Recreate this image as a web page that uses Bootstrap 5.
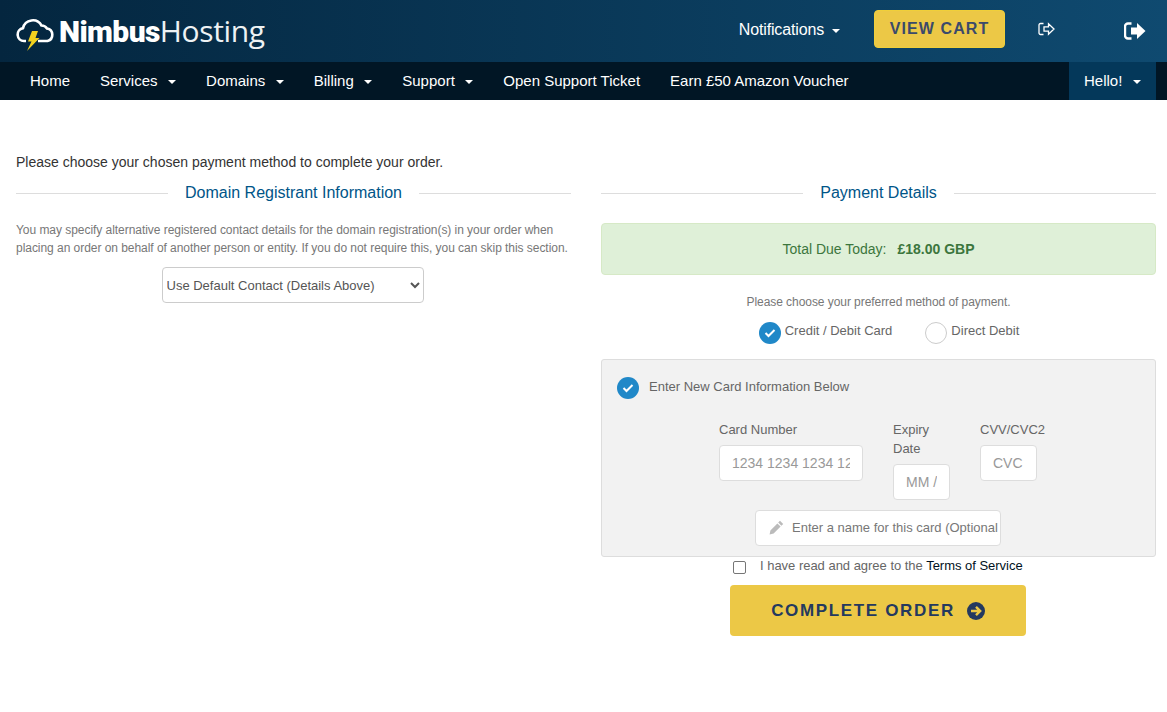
<!DOCTYPE html>
<html lang="en">
<head>
<meta charset="utf-8">
<title>Checkout</title>
<link href="https://cdn.jsdelivr.net/npm/bootstrap@5.3.0/dist/css/bootstrap.min.css" rel="stylesheet">
<style>
body{font-family:"Liberation Sans",Arial,sans-serif;font-size:14px;color:#333;background:#fff;}
.top-strip{height:62px;background:linear-gradient(90deg,#04263f 0%,#0f4a70 100%);padding:0 11px 0 16px;}
.brand-wrap{gap:3px;}
.brand-text{font-family:"Open Sans","Noto Sans",sans-serif;font-size:30px;color:#eef2f4;line-height:1;font-weight:400;letter-spacing:-.35px;}
.brand-text b{font-family:Roboto,"Open Sans",sans-serif;font-weight:900;color:#fff;letter-spacing:-.6px;}
.notif-link{color:#fff;font-size:16px;text-decoration:none;margin:0 34px 2px 0;letter-spacing:-.15px;}
.caret-mark{display:inline-block;width:0;height:0;border-left:4px solid transparent;border-right:4px solid transparent;border-top:4px solid currentColor;vertical-align:middle;margin-left:8px;}
.cart-btn{background:#ecc846;border:1px solid #f0cf3a;color:#3b4a6b;font-weight:700;font-size:16px;letter-spacing:1.1px;width:131px;height:38px;padding:0;border-radius:4px;line-height:1;margin-bottom:4px;}
.icon-gap-a{margin:0 0 4px 33px;}
.icon-gap-b{margin-left:69px;margin-right:10px;}
.nav-strip{height:38px;background:#011625;padding:0 11px 0 15px;}
.nav-entry{color:#fff;font-size:15px;text-decoration:none;padding:0 15px;line-height:38px;display:block;white-space:nowrap;}
.nav-entry .caret-mark{margin-left:10.5px;}
.hello-entry{background:#04385a;width:87px;}
.page-wrap{padding:52px 11px 0 16px;}
.lead-line{font-size:14px;line-height:20px;margin:0 0 11px;}
.cols{display:grid;grid-template-columns:555px 555px;column-gap:30px;}
.rule-head{display:flex;align-items:center;height:20px;color:#058;font-size:16px;line-height:20px;}
.rule-head::before,.rule-head::after{content:"";flex:1;border-top:1px solid #ddd;}
.rule-head span{padding:0 17px;}
.help-text{font-size:12px;line-height:18px;color:#777;margin:18px 0 10px;letter-spacing:-.045px;}
.contact-select{width:262px;height:36px;font-size:13px;color:#555;border:1px solid #ccc;border-radius:4px;padding:0;margin-right:2px;font-family:inherit;background-color:#fff;}
.due-box{height:52px;margin-top:20px;background:#dff0d8;border:1px solid #d6e9c6;border-radius:4px;color:#3c763d;font-size:14px;}
.due-box strong{margin-left:11px;}
.choose-line{font-size:12px;color:#777;text-align:center;margin:19px 0 0;line-height:17px;letter-spacing:-.06px;}
.pay-opts{gap:33px;margin-top:10px;height:24px;font-size:13px;color:#666;padding-left:21px;}
.pay-opt{gap:4px;line-height:17px;}
.pay-label{position:relative;top:-3px;}
.circle-on,.circle-off{width:22px;height:22px;border-radius:50%;flex:none;display:flex;align-items:center;justify-content:center;}
.circle-on{background:#2088c8;}
.circle-off{background:#fff;border:1px solid #ccc;}
.card-panel{margin-top:14px;height:198px;background:#f2f2f2;border:1px solid #ddd;border-radius:3px;padding:17px 15px 0;font-size:13px;color:#666;}
.panel-head{gap:10px;height:22px;line-height:20px;}
.panel-head .pay-label{top:-1px;}
.field-grid{display:flex;align-items:flex-start;justify-content:center;gap:30px;margin-top:21px;padding-left:7px;}
.field-grid label{display:block;line-height:19px;margin-bottom:6px;}
.cvc-col{width:65px;white-space:nowrap;}
.card-field{display:block;height:36px;background:#fff;border:1px solid #ddd;border-radius:4px;font-size:14px;padding:0 12px;outline:0;}
.card-field::placeholder{color:#999;opacity:1;}
.num-field{width:144px;}
.exp-field,.cvc-field{width:57px;}
.name-wrap{width:246px;margin:10px 0 0 138px;}
.name-field{width:100%;font-size:13px;padding:0 2px 2px 36px;}
.name-field::placeholder{color:#777;}
.pencil-mark{position:absolute;left:14px;top:10px;}
.terms-row{gap:14px;margin-top:1px;height:20px;font-size:13px;color:#666;padding-left:132px;line-height:17px;}
.terms-row .form-check-input{margin:3px 0 0;width:13px;height:13px;border-color:#767676;border-radius:2px;flex:none;}
.terms-text{letter-spacing:-.02px;position:relative;top:-1px;}
.terms-text a{color:#012;text-decoration:none;}
.finish-btn{display:flex;align-items:center;justify-content:center;gap:12px;width:296px;height:51px;margin:7px 0 0 129px;background:#ecc846;border:0;border-radius:4px;color:#24395f;font-size:17px;font-weight:700;letter-spacing:1.65px;padding:0;}
</style>
</head>
<body>
<header>
  <div class="top-strip d-flex align-items-center">
    <div class="brand-wrap d-flex align-items-center">
      <svg width="40" height="40" viewBox="0 0 40 40"><path d="M10 30H8A6.500 6.500 0 0 1 7 17.100 10 10 0 0 1 25.500 14.500 6.500 6.500 0 0 1 31 17.500 6.400 6.400 0 0 1 31.500 30H22" fill="none" stroke="#fff" stroke-width="2.600"/><path d="M16 20H22L19.500 27H23.500L11 40 15.500 30.500H12z" fill="#f2d21f"/></svg>
      <div class="brand-text"><b>Nimbus</b>Hosting</div>
    </div>
    <div class="ms-auto d-flex align-items-center">
      <a class="notif-link" href="#">Notifications<span class="caret-mark"></span></a>
      <button class="btn cart-btn" type="button">VIEW CART</button>
      <svg class="icon-gap-a" width="17" height="14" viewBox="0 0 17 14"><path d="M5.500 1.500H2.500A1.500 1.500 0 0 0 1 3v8a1.500 1.500 0 0 0 1.500 1.500h3M6 4.800h4.500V1.800L16 7l-5.500 5.200V9.200H6z" fill="none" stroke="#fff" stroke-width="1.300"/></svg>
      <svg class="icon-gap-b" width="22" height="18" viewBox="0 0 22 18"><path d="M7.500 1.500H4A3 3 0 0 0 1 4.500v9a3 3 0 0 0 3 3h3.500" fill="none" stroke="#fff" stroke-width="2.400"/><path d="M7 5.500h6V1l8.500 8-8.500 8v-4.500H7z" fill="#fff"/></svg>
    </div>
  </div>
  <nav class="nav-strip d-flex">
    <a class="nav-entry" href="#">Home</a>
    <a class="nav-entry" href="#">Services<span class="caret-mark"></span></a>
    <a class="nav-entry" href="#">Domains<span class="caret-mark"></span></a>
    <a class="nav-entry" href="#">Billing<span class="caret-mark"></span></a>
    <a class="nav-entry" href="#">Support<span class="caret-mark"></span></a>
    <a class="nav-entry" href="#">Open Support Ticket</a>
    <a class="nav-entry" href="#">Earn £50 Amazon Voucher</a>
    <a class="nav-entry hello-entry ms-auto" href="#">Hello!<span class="caret-mark"></span></a>
  </nav>
</header>
<main class="page-wrap">
  <p class="lead-line">Please choose your chosen payment method to complete your order.</p>
  <div class="cols">
    <section>
      <div class="rule-head"><span>Domain Registrant Information</span></div>
      <p class="help-text">You may specify alternative registered contact details for the domain registration(s) in your order when placing an order on behalf of another person or entity. If you do not require this, you can skip this section.</p>
      <div class="text-center">
        <select class="contact-select" aria-label="Contact"><option>Use Default Contact (Details Above)</option></select>
      </div>
    </section>
    <section>
      <div class="rule-head"><span>Payment Details</span></div>
      <div class="due-box d-flex align-items-center justify-content-center">Total Due Today: <strong>£18.00 GBP</strong></div>
      <p class="choose-line">Please choose your preferred method of payment.</p>
      <div class="pay-opts d-flex justify-content-center">
        <div class="pay-opt d-flex align-items-center"><span class="circle-on"><svg width="12" height="10" viewBox="0 0 12 10"><path d="M1.500 5l3 3 6-6" fill="none" stroke="#fff" stroke-width="2"/></svg></span><span class="pay-label">Credit / Debit Card</span></div>
        <div class="pay-opt d-flex align-items-center"><span class="circle-off"></span><span class="pay-label">Direct Debit</span></div>
      </div>
      <div class="card-panel">
        <div class="panel-head d-flex align-items-center"><span class="circle-on"><svg width="12" height="10" viewBox="0 0 12 10"><path d="M1.500 5l3 3 6-6" fill="none" stroke="#fff" stroke-width="2"/></svg></span><span class="pay-label">Enter New Card Information Below</span></div>
        <div class="field-grid">
          <div><label for="cnum">Card Number</label><input id="cnum" class="card-field num-field" type="text" placeholder="1234 1234 1234 1234"></div>
          <div><label for="cexp">Expiry<br>Date</label><input id="cexp" class="card-field exp-field" type="text" placeholder="MM / YY"></div>
          <div class="cvc-col"><label for="ccvc">CVV/CVC2</label><input id="ccvc" class="card-field cvc-field" type="text" placeholder="CVC"></div>
        </div>
        <div class="name-wrap position-relative">
          <input class="card-field name-field" type="text" aria-label="Card name" placeholder="Enter a name for this card (Optional)">
          <svg class="pencil-mark" width="15" height="15" viewBox="0 0 15 15"><path d="M11 .8l3.200 3.200-1.800 1.800-3.200-3.200zM8.400 3.400l3.200 3.200-7 7L.6 14.400l.8-4z" fill="#bbb"/></svg>
        </div>
      </div>
      <div class="terms-row d-flex"><input class="form-check-input" type="checkbox" aria-label="Agree"><span class="terms-text">I have read and agree to the <a href="#">Terms of Service</a></span></div>
      <button class="finish-btn" type="button">COMPLETE ORDER <svg width="18" height="18" viewBox="0 0 18 18"><circle cx="9" cy="9" r="9" fill="#24395f"/><path d="M4 9h9M9 4.800 13.200 9 9 13.200" fill="none" stroke="#ecc846" stroke-width="2.400"/></svg></button>
    </section>
  </div>
</main>
</body>
</html>
